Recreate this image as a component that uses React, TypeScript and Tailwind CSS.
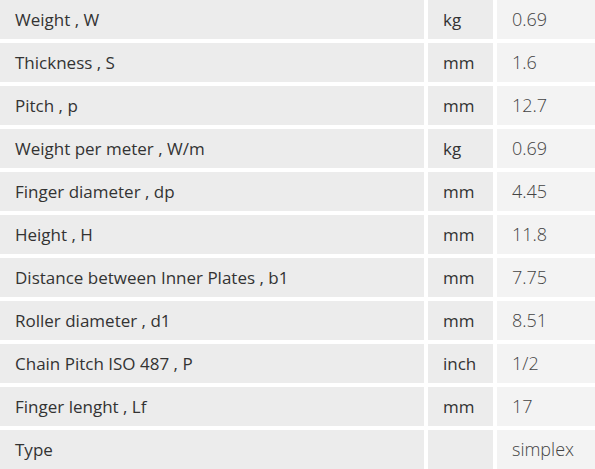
const rows: [string, string, string][] = [
  ["Weight , W", "kg", "0.69"],
  ["Thickness , S", "mm", "1.6"],
  ["Pitch , p", "mm", "12.7"],
  ["Weight per meter , W/m", "kg", "0.69"],
  ["Finger diameter , dp", "mm", "4.45"],
  ["Height , H", "mm", "11.8"],
  ["Distance between Inner Plates , b1", "mm", "7.75"],
  ["Roller diameter , d1", "mm", "8.51"],
  ["Chain Pitch ISO 487 , P", "inch", "1/2"],
  ["Finger lenght , Lf", "mm", "17"],
  ["Type", "", "simplex"],
];

const App = () => {
  return (
    <div className="h-[469px] w-[595px] overflow-hidden bg-white font-['Open_Sans',sans-serif]">
      <div className="grid grid-cols-[424px_65px_98px] auto-rows-[39px] gap-[4px]">
        {rows.map(([name, unit, value]) => (
          <div key={name} className="contents">
            <div className="flex items-center bg-[#ececec] pl-[15px] text-[17px] text-[#333]">
              {name}
            </div>
            <div className="flex items-center bg-[#ececec] pl-[15px] text-[17px] text-[#333]">
              {unit}
            </div>
            <div className="flex items-center bg-[#f3f3f3] pl-[15px] text-[18px] font-light text-[#444]">
              {value}
            </div>
          </div>
        ))}
      </div>
    </div>
  );
};

export default App;
